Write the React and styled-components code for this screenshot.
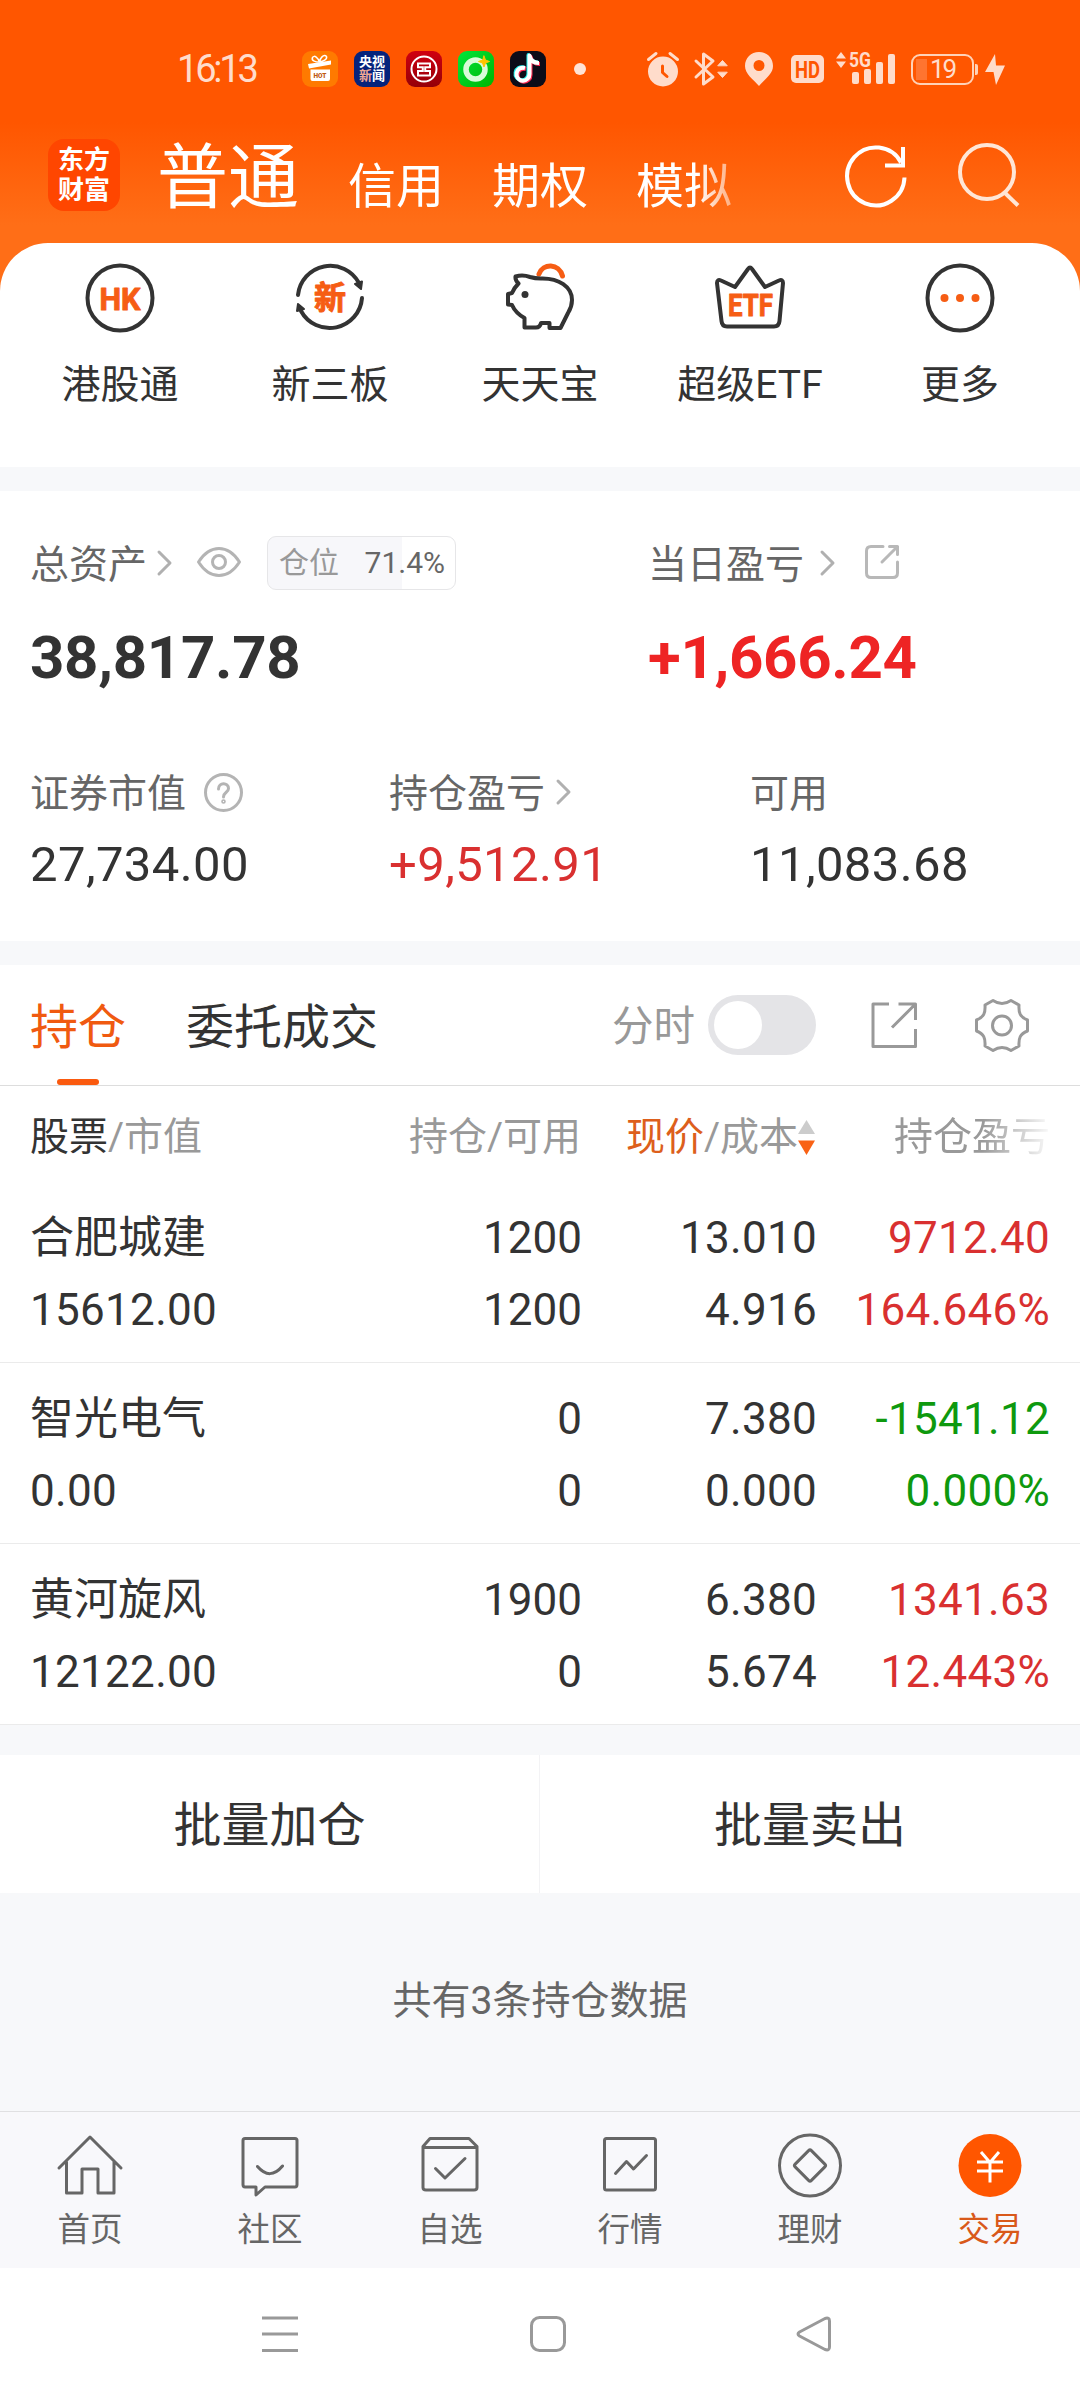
import React from "react";
import styled, { createGlobalStyle, css } from "styled-components";

const GlobalStyle = createGlobalStyle`
  * { box-sizing: border-box; }
  body { margin: 0; background: #fff; }
  svg { display: block; flex: none; overflow: visible; }
`;

const Screen = styled.div`
  width: 1080px;
  height: 2400px;
  display: flex;
  flex-direction: column;
  overflow: hidden;
  background: #fff;
  color: #333;
  font-family: Roboto, "Noto Sans CJK SC", sans-serif;
  white-space: nowrap;
`;

/* ---------- header ---------- */
const Header = styled.header`
  height: 243px;
  background: linear-gradient(#ff5600 0, #ff5600 122px, #ff6e17 225px, #ff6e17 100%);
`;

const StatusBar = styled.div`
  height: 115px;
  padding: 23px 0 0 177px;
  display: flex;
  align-items: center;
  color: #ffdccb;
`;

const Time = styled.div`
  flex: none;
  width: 125px;
  font-size: 38px;
  line-height: 44px;
  letter-spacing: -3.2px;
`;

const AppIcons = styled.div`
  flex: none;
  display: flex;
  gap: 16px;
`;

const AppIcon = styled.div`
  width: 36px;
  height: 36px;
  border-radius: 9px;
  background: ${(p) => p.$bg};
  overflow: hidden;
  color: #fff;
  display: grid;
  place-content: center;
  text-align: center;
  font-size: 13px;
  line-height: 14px;
  font-weight: 700;
`;

const Tint = styled.span`
  color: #f2a993;
`;

const Dot = styled.div`
  flex: none;
  width: 12px;
  height: 12px;
  border-radius: 50%;
  background: #ffe3d6;
  margin: 0 61px 0 28px;
`;

const Indicators = styled.div`
  display: flex;
  align-items: center;
`;

const Slot = styled.div`
  flex: none;
  margin-right: ${(p) => p.$gap}px;
`;

const Battery = styled.div`
  flex: none;
  width: 63px;
  height: 31px;
  padding: 2px;
  border: 2px solid #ffd2b8;
  border-radius: 9px;
  display: flex;
  align-items: center;
  justify-content: center;
  font-size: 26px;
  line-height: 26px;
  letter-spacing: -2px;
  background: linear-gradient(#ff7430, #ff7430) 3px 3px / 11px 21px no-repeat;
`;

const BatteryCap = styled.div`
  width: 3px;
  height: 11px;
  margin: 0 7px 0 1px;
  background: #ffd2b8;
  border-radius: 0 2px 2px 0;
`;

const TitleBar = styled.div`
  height: 128px;
  padding: 0 60px 0 48px;
  display: flex;
  color: #fff;
`;

const Logo = styled.div`
  width: 72px;
  height: 72px;
  margin-top: 24px;
  border-radius: 16px;
  background: #ff4600;
  display: grid;
  place-content: center;
  font-size: 26px;
  line-height: 30px;
  font-weight: 700;
  text-align: center;
`;

const AccountTabs = styled.nav`
  width: 640px;
  margin-left: 37px;
  display: flex;
  align-items: flex-start;
  height: 128px;
  mask-image: linear-gradient(90deg, #000 540px, transparent 605px);
`;

const AccountTab = styled.span`
  margin-right: 48px;
  font-size: 48px;
  line-height: 143px;
  ${(p) => p.$active && css`
    margin-right: 49px;
    font-size: 71px;
    line-height: 125px;
  `}
`;

const HeaderActions = styled.div`
  display: flex;
  gap: 51px;
  padding-top: 30px;
  margin-left: 48px;
`;

/* ---------- shortcuts ---------- */
const ShortcutBack = styled.div`
  background: #ff6e17;
`;

const Shortcuts = styled.div`
  height: 224px;
  padding: 20px 15px 0;
  background: #fff;
  border-radius: 48px 48px 0 0;
  display: grid;
  grid-template-columns: repeat(5, 210px);
`;

const Shortcut = styled.div`
  display: flex;
  flex-direction: column;
  align-items: center;
  gap: 27px;
  font-size: 39px;
  line-height: 50px;
`;

const Band = styled.div`
  height: ${(p) => p.$h}px;
  background: #f7f8fa;
`;

/* ---------- assets ---------- */
const Assets = styled.section`
  height: 450px;
  padding: 45px 30px 0;
`;

const PrimaryRow = styled.div`
  display: grid;
  grid-template-columns: 618px 1fr;
`;

const SecondaryRow = styled.div`
  display: grid;
  grid-template-columns: 359px 361px 1fr;
  margin-top: 71px;
`;

const Label = styled.div`
  height: 54px;
  display: flex;
  align-items: center;
  font-size: 39px;
  line-height: 54px;
  color: #666;
`;

const LabelText = styled.span`
  padding-top: 3px;
  margin-right: ${(p) => p.$gap}px;
`;

const BigValue = styled.div`
  margin-top: 32px;
  font-size: 60px;
  line-height: 72px;
  font-weight: 700;
  letter-spacing: -0.3px;
  color: ${(p) => p.$color || "#333"};
`;

const Value = styled.div`
  margin-top: 17px;
  font-size: 49px;
  line-height: 58px;
  letter-spacing: 0.4px;
  color: ${(p) => p.$color || "#333"};
`;

const PositionBadge = styled.div`
  width: 189px;
  height: 54px;
  margin-left: 26px;
  padding: 0 10px 0 11px;
  display: flex;
  align-items: center;
  justify-content: space-between;
  border: 1px solid #e6e6e8;
  border-radius: 9px;
  background: linear-gradient(90deg, #f7f7fa 71.4%, #fff 71.4%);
  font-size: 30px;
  color: #666;
`;

const Muted = styled.span`
  color: #999;
`;

/* ---------- holdings ---------- */
const HoldingsBar = styled.div`
  height: 121px;
  border-bottom: 1px solid #ddd;
  padding: 0 51px 0 30px;
  display: flex;
  align-items: center;
`;

const HoldingsTab = styled.div`
  height: 120px;
  margin-right: 60px;
  display: flex;
  flex-direction: column;
  align-items: center;
  justify-content: space-between;
  font-size: 48px;
  line-height: 126px;
  color: ${(p) => (p.$active ? "#f05a10" : "#333")};
`;

const HoldingsTabText = styled.span`
  height: 114px;
`;

const Underline = styled.span`
  width: 42px;
  height: 6px;
  border-radius: 3px;
  background: #fa5a0f;
`;

const Tools = styled.div`
  margin-left: auto;
  display: flex;
  align-items: center;
`;

const ToggleLabel = styled.span`
  font-size: 41.5px;
  line-height: 50px;
  color: #999;
  padding-top: 4px;
`;

const Toggle = styled.div`
  width: 108px;
  height: 60px;
  margin: 0 55px 0 13px;
  padding: 6px;
  border-radius: 30px;
  background: #e4e4e7;
`;

const Knob = styled.div`
  width: 48px;
  height: 48px;
  border-radius: 50%;
  background: #fff;
`;

const tableColumns = css`
  padding: 0 30px;
  display: grid;
  grid-template-columns: 303px 249px 235px 233px;
`;

const TableHead = styled.div`
  ${tableColumns}
  height: 96px;
  font-size: 39px;
  line-height: 102px;
  color: #999;
`;

const HeadCell = styled.div`
  display: flex;
  align-items: center;
  justify-content: ${(p) => (p.$left ? "flex-start" : "flex-end")};
  padding-right: ${(p) => p.$inset || 0}px;
  ${(p) => p.$fade && css`mask-image: linear-gradient(90deg, #000 165px, rgba(0, 0, 0, 0.05) 233px);`}
`;

const HeadStrong = styled.span`
  color: ${(p) => p.$color};
`;

const Row = styled.div`
  ${tableColumns}
  height: 181px;
  padding-top: 20px;
  border-bottom: 1px solid #ebebeb;
  font-size: 44px;
  line-height: 72px;
`;

const Cell = styled.div`
  text-align: ${(p) => (p.$left ? "left" : "right")};
  color: ${(p) => p.$color || "#333"};
`;

const Amount = styled.span`
  letter-spacing: 0.3px;
`;

const BatchActions = styled.div`
  height: 138px;
  display: grid;
  grid-template-columns: 1fr 1fr;
`;

const BatchButton = styled.div`
  font-size: 48px;
  line-height: 142px;
  text-align: center;
  border-right: ${(p) => (p.$divided ? "1px solid #f3f3f5" : "0")};
`;

const Summary = styled.div`
  height: 218px;
  background: #f7f8fa;
  color: #666;
  font-size: 39px;
  line-height: 216px;
  text-align: center;
`;

/* ---------- bottom ---------- */
const TabBar = styled.nav`
  height: 157px;
  border-top: 1px solid #e0e0e2;
  background: #f8f8fb;
  display: grid;
  grid-template-columns: repeat(6, 180px);
`;

const TabItem = styled.div`
  display: flex;
  flex-direction: column;
  align-items: center;
  padding-top: 20px;
  gap: 12px;
  font-size: 32.5px;
  line-height: 40px;
  color: ${(p) => (p.$active ? "#d9591a" : "#666")};
`;

const SystemNav = styled.div`
  height: 132px;
  padding: 0 249px 0 262px;
  display: flex;
  align-items: center;
  justify-content: space-between;
`;

/* ---------- drawings ---------- */
const Svg = ({ w, h, children, color = "#333", sw = 3, fill = "none" }) => (
  <svg width={w} height={h} viewBox={`0 0 ${w} ${h}`} fill={fill} stroke={color} strokeWidth={sw} strokeLinecap="round" strokeLinejoin="round">
    {children}
  </svg>
);

const iconText = {
  fill: "#f65d14",
  stroke: "#f65d14",
  strokeWidth: 1,
  fontWeight: 700,
  fontFamily: 'Roboto, "Noto Sans CJK SC", sans-serif',
  textAnchor: "middle",
};

const Chevron = () => (
  <Svg w={15} h={26} color="#b0b0b0"><path d="M2 2 13 13 2 24" /></Svg>
);

const shortcuts = [
  ["港股通", <Svg w={70} h={70} sw={4}>
    <circle cx="35" cy="35" r="32.5" />
    <text x="35" y="46.5" fontSize="32" textLength="41" lengthAdjust="spacingAndGlyphs" {...iconText}>HK</text>
  </Svg>],
  ["新三板", <Svg w={70} h={70} sw={4}>
    <path d="M3 32A32.5 32.5 0 0 1 64 20M67 35A32.5 32.5 0 0 1 6 48" />
    <path d="M60 21 67 18.5 66 26ZM3 41 2 48 9 46Z" fill="#333" strokeWidth="2" />
    <text x="35" y="46" fontSize="32" {...iconText}>新</text>
  </Svg>],
  ["天天宝", <Svg w={70} h={70} sw={4}>
    <path d="M34 11C38 0 54 0 57.500 13" stroke="#f65d14" strokeWidth="5" />
    <path d="M10.500 13.500Q18 11.500 25 14Q30 15.500 36 15.500C54 15 67 24 67 37C67 42 65.500 46 63 50L55.500 65H44.500V60H36Q35 64.500 31 64.500H19.500V55Q10.500 50 7 42L3 41.500V31L7 30Q9 25 13.500 20.500Q10 17 10.500 13.500Z" />
    <circle cx="20" cy="31.500" r="3.500" fill="#333" stroke="none" />
  </Svg>],
  ["超级ETF", <Svg w={70} h={70} sw={4}>
    <path d="M6 17.500 20 24 33 6Q35 3 37 6L50 24 64 17.500Q68 16 68 20L64.500 58Q64 63.500 59 63.500H12Q7 63.500 6.500 58L2 20Q2 16 6 17.500Z" />
    <text x="35.500" y="52.500" fontSize="32" textLength="45" lengthAdjust="spacingAndGlyphs" {...iconText}>ETF</text>
  </Svg>],
  ["更多", <Svg w={70} h={70} sw={4}>
    <circle cx="35" cy="35" r="32.5" />
    <g fill="#f65d14" stroke="none"><circle cx="19.500" cy="35" r="4" /><circle cx="35" cy="35" r="4" /><circle cx="50.500" cy="35" r="4" /></g>
  </Svg>],
];

const tabs = [
  ["首页", <Svg w={66} h={66} color="#666">
    <path d="M2 36 33 5 64 36M9.500 30V61H25V37H41V61H57V30" />
  </Svg>],
  ["社区", <Svg w={66} h={66} color="#666">
    <path d="M8 6.500H58Q60 6.500 60 8.500V52.500Q60 55 58 55H28L19 63V55H8Q6 55 6 52.500V8.500Q6 6.500 8 6.500ZM20.500 34.500Q33 49 45.500 34" />
  </Svg>],
  ["自选", <Svg w={66} h={66} color="#666">
    <path d="M6 14.500 13 6.500H52L60 14.500V55.500Q60 58 57 58H9Q6 58 6 55.500ZM6 15.500H60M18.500 36.500 28 46 48 26.500" />
  </Svg>],
  ["行情", <Svg w={66} h={66} color="#666">
    <rect x="7.500" y="6.500" width="51" height="51.500" rx="2" />
    <path d="M18.500 41.500 29.500 29.500 36.500 37 49.500 23.500" />
  </Svg>],
  ["理财", <Svg w={66} h={66} color="#666">
    <circle cx="33" cy="33.500" r="30.500" />
    <rect x="21.500" y="22" width="23" height="23" rx="2" transform="rotate(45 33 33.500)" />
  </Svg>],
  ["交易", <Svg w={66} h={66} color="#fff">
    <circle cx="33" cy="33.500" r="31.500" fill="#ff5600" stroke="none" />
    <path d="M24 20 33 30.500 42 20M33 30.500V50.500M20 30H46M20 39H46" strokeLinecap="butt" />
  </Svg>],
];

const RED = "#d93030";
const GREEN = "#0e990e";

const holdings = [
  { name: "合肥城建", value: "15612.00", held: "1200", usable: "1200", price: "13.010", cost: "4.916", profit: "9712.40", rate: "164.646%", color: RED },
  { name: "智光电气", value: "0.00", held: "0", usable: "0", price: "7.380", cost: "0.000", profit: "-1541.12", rate: "0.000%", color: GREEN },
  { name: "黄河旋风", value: "12122.00", held: "1900", usable: "0", price: "6.380", cost: "5.674", profit: "1341.63", rate: "12.443%", color: RED },
];

const StatusIndicators = () => (
  <Indicators>
    <Slot $gap={15}>
      <Svg w={32} h={34} color="#ffdccb">
        <circle cx="16" cy="19.500" r="15" fill="#ffdccb" stroke="none" />
        <path d="M1.500 7.500 9 1.500M30.500 7.500 23 1.500" />
        <path d="M15.500 14V20.500L20 24.500" stroke="#ff5600" />
      </Svg>
    </Slot>
    <Slot $gap={17}>
      <Svg w={34} h={34} color="#ffdccb">
        <path d="M2 9 19 25 9.500 32V2L19 9 2 25" />
        <path d="M24 13.500 28.500 8.500 33 13.500ZM24 20.500 28.500 25.500 33 20.500Z" fill="#ffdccb" strokeWidth="1" />
      </Svg>
    </Slot>
    <Slot $gap={18}>
      <Svg w={28} h={34}>
        <path d="M14 0C6 0 0 6 0 14C0 22 8 27 14 34C20 27 28 22 28 14C28 6 22 0 14 0ZM14 8A5.500 5.500 0 1 1 14 19A5.500 5.500 0 1 1 14 8Z" fill="#ffdccb" stroke="none" fillRule="evenodd" />
      </Svg>
    </Slot>
    <Slot $gap={12}>
      <Svg w={33} h={28}>
        <rect width="33" height="28" rx="5" fill="#ffdccb" stroke="none" />
        <text x="16.500" y="22.500" fontSize="23" fontWeight="700" fontFamily="Roboto, sans-serif" textAnchor="middle" textLength="25" lengthAdjust="spacingAndGlyphs" fill="#ff5600" stroke="none">HD</text>
      </Svg>
    </Slot>
    <Slot $gap={16}>
      <Svg w={59} h={34} fill="#ffdccb">
        <g stroke="none">
          <path d="M0 6.500 5 0 10 6.500ZM0 9.500 5 16 10 9.500Z" />
          <rect x="16" y="20" width="7" height="12" rx="2" />
          <rect x="28" y="17" width="7" height="15" rx="2" />
          <rect x="40" y="10" width="7" height="22" rx="2" />
          <rect x="52" y="2" width="7" height="30" rx="2" />
          <text x="13" y="15" fontSize="20" fontWeight="700" fontFamily="Roboto, sans-serif" textLength="22" lengthAdjust="spacingAndGlyphs">5G</text>
        </g>
      </Svg>
    </Slot>
    <Battery>19</Battery>
    <BatteryCap />
    <Svg w={20} h={31} fill="#ffdccb" color="#ffdccb" sw={1}>
      <path d="M10 0 0 18H8.500L11 31 20 11.500H11Z" stroke="none" />
    </Svg>
  </Indicators>
);

export default function App() {
  return (
    <Screen>
      <GlobalStyle />
      <Header>
        <StatusBar>
          <Time>16:13</Time>
          <AppIcons>
            <AppIcon $bg="#ff7a00">
              <Svg w={36} h={36}>
                <path d="M17.500 11C14 11 9 10 10.500 6.500C12.500 3.500 16 7 17.500 11C18 7 22 2.500 24.500 5.500C25.500 8.500 21 10.500 17.500 11" stroke="#fff" strokeWidth="1.500" />
                <path d="M6 13 29 9.500V13.500L7 17.500ZM8.500 18.500H28V28Q28 30 26 30H10.500Q8.500 30 8.500 28Z" fill="#fff" stroke="none" />
                <text x="18" y="26.500" fontSize="6.500" fontWeight="900" fontFamily="Roboto, sans-serif" textAnchor="middle" fill="#c05a10" stroke="none">HOT</text>
              </Svg>
            </AppIcon>
            <AppIcon $bg="#05237c"><span>央视</span><span><Tint>新</Tint>闻</span></AppIcon>
            <AppIcon $bg="linear-gradient(#d00010, #940008)">
              <Svg w={36} h={36} color="#fff" sw={2}>
                <circle cx="18" cy="18" r="12.500" />
                <path d="M16.800 12.500H12V16.300H16.800V20H12V24.500H16.800M19.200 12.500H24V16.300H19.200V20H24V24.500H19.200M16 12.500H20M16 24.500H20" strokeLinecap="butt" strokeLinejoin="miter" />
              </Svg>
            </AppIcon>
            <AppIcon $bg="linear-gradient(135deg, #00e63c, #00b400)">
              <Svg w={36} h={36}>
                <circle cx="17.500" cy="18.500" r="9.500" stroke="#d9fbd9" strokeWidth="5.500" />
                <path d="M26 5 27.500 9 31.500 10.500 27.500 12 26 16 24.500 12 20.500 10.500 24.500 9Z" fill="#ffc400" stroke="#ffc400" strokeWidth="1" />
              </Svg>
            </AppIcon>
            <AppIcon $bg="#0c0c18">
              <Svg w={36} h={36} sw={4}>
                <g strokeLinecap="butt">
                  <path d="M15 17A6.500 6.500 0 1 0 19.500 23V4.500C20.500 9 24 12 29 12" stroke="#ff2a55" transform="translate(1 1)" />
                  <path d="M15 17A6.500 6.500 0 1 0 19.500 23V4.500C20.500 9 24 12 29 12" stroke="#25f4ee" transform="translate(-1 -.5)" />
                  <path d="M15 17A6.500 6.500 0 1 0 19.500 23V4.500C20.500 9 24 12 29 12" stroke="#fff" />
                </g>
              </Svg>
            </AppIcon>
          </AppIcons>
          <Dot />
          <StatusIndicators />
        </StatusBar>
        <TitleBar>
          <Logo><span>东方</span><span>财富</span></Logo>
          <AccountTabs>
            <AccountTab $active>普通</AccountTab>
            <AccountTab>信用</AccountTab>
            <AccountTab>期权</AccountTab>
            <AccountTab>模拟</AccountTab>
          </AccountTabs>
          <HeaderActions>
            <Svg w={62} h={62} color="#fff" sw={4}>
              <path d="M59.500 32.500A28.700 29 0 1 1 56 17.500M58 2V20.500H40" strokeLinecap="butt" strokeLinejoin="miter" />
            </Svg>
            <Svg w={62} h={62} color="#ffe6d6" sw={4}>
              <path d="M47 48 60 60.500" strokeLinecap="butt" />
              <circle cx="29" cy="27" r="27" />
            </Svg>
          </HeaderActions>
        </TitleBar>
      </Header>

      <ShortcutBack>
        <Shortcuts>
          {shortcuts.map(([label, icon]) => (
            <Shortcut key={label}>{icon}<span>{label}</span></Shortcut>
          ))}
        </Shortcuts>
      </ShortcutBack>
      <Band $h={24} />

      <Assets>
        <PrimaryRow>
          <div>
            <Label>
              <LabelText $gap={10}>总资产</LabelText>
              <Chevron />
              <Slot $gap={25} />
              <Svg w={44} h={34} color="#b4b4b4">
                <path d="M1.500 16C13-2 31-2 42.500 16C31 34 13 34 1.500 16Z" />
                <circle cx="22" cy="16" r="6.500" />
              </Svg>
              <PositionBadge><Muted>仓位</Muted><span>71.4%</span></PositionBadge>
            </Label>
            <BigValue>38,817.78</BigValue>
          </div>
          <div>
            <Label>
              <LabelText $gap={16}>当日盈亏</LabelText>
              <Chevron />
              <Slot $gap={30} />
              <Svg w={34} h={36} color="#b8b8b8">
                <path d="M18 1.500H6Q1.500 1.500 1.500 6V28Q1.500 32.500 6 32.500H28Q32.500 32.500 32.500 28V17M24.500 1.500H32.500V9.500M32.500 1.500 17 17" />
              </Svg>
            </Label>
            <BigValue $color="#ee2424">+1,666.24</BigValue>
          </div>
        </PrimaryRow>
        <SecondaryRow>
          <div>
            <Label>
              <LabelText $gap={18}>证券市值</LabelText>
              <Svg w={39} h={39} color="#b4b4b4">
                <circle cx="19.500" cy="19.500" r="18" />
                <path d="M14.500 16C14.500 9 24.500 9 24.500 15.500C24.500 19.500 19.500 19 19.500 24" />
                <circle cx="19.500" cy="28.500" r=".8" />
              </Svg>
            </Label>
            <Value>27,734.00</Value>
          </div>
          <div>
            <Label><LabelText $gap={11}>持仓盈亏</LabelText><Chevron /></Label>
            <Value $color={RED}>+9,512.91</Value>
          </div>
          <div>
            <Label><LabelText>可用</LabelText></Label>
            <Value>11,083.68</Value>
          </div>
        </SecondaryRow>
      </Assets>
      <Band $h={24} />

      <HoldingsBar>
        <HoldingsTab $active><HoldingsTabText>持仓</HoldingsTabText><Underline /></HoldingsTab>
        <HoldingsTab><HoldingsTabText>委托成交</HoldingsTabText></HoldingsTab>
        <Tools>
          <ToggleLabel>分时</ToggleLabel>
          <Toggle><Knob /></Toggle>
          <Svg w={46} h={46} color="#999">
            <path d="M18 2H2V44.500H44.500V27M27.500 2H44.500V18M44 2.500 21 25.500" strokeLinecap="butt" />
          </Svg>
          <Slot $gap={58} />
          <Svg w={54} h={55} color="#999">
            <path d="M18 2.500Q27 8.500 36 2.500L44 7C43.500 15 45 19 52.500 22V33C45 36 43.500 40 44 48L36 52.500Q27 46.500 18 52.500L10 48C10.500 40 9 36 1.500 33V22C9 19 10.500 15 10 7Z" />
            <circle cx="27" cy="27.500" r="9.500" />
          </Svg>
        </Tools>
      </HoldingsBar>

      <TableHead>
        <HeadCell $left><HeadStrong $color="#333">股票</HeadStrong>/市值</HeadCell>
        <HeadCell $inset={1}>持仓/可用</HeadCell>
        <HeadCell $inset={2}>
          <HeadStrong $color="#dd5f1c">现价</HeadStrong>/成本
          <Svg w={17} h={35}>
            <path d="M8.500 0 17 14H0Z" fill="#ccc" stroke="none" />
            <path d="M8.500 35 17 20.500H0Z" fill="#f96215" stroke="none" />
          </Svg>
        </HeadCell>
        <HeadCell $fade>持仓盈亏</HeadCell>
      </TableHead>

      {holdings.map((h) => (
        <Row key={h.name}>
          <Cell $left>{h.name}<br /><Amount>{h.value}</Amount></Cell>
          <Cell>{h.held}<br />{h.usable}</Cell>
          <Cell><Amount>{h.price}</Amount><br /><Amount>{h.cost}</Amount></Cell>
          <Cell $color={h.color}><Amount>{h.profit}</Amount><br /><Amount>{h.rate}</Amount></Cell>
        </Row>
      ))}

      <Band $h={30} />
      <BatchActions>
        <BatchButton $divided>批量加仓</BatchButton>
        <BatchButton>批量卖出</BatchButton>
      </BatchActions>
      <Summary>共有3条持仓数据</Summary>

      <TabBar>
        {tabs.map(([label, icon], i) => (
          <TabItem key={label} $active={i === 5}>{icon}<span>{label}</span></TabItem>
        ))}
      </TabBar>
      <SystemNav>
        <Svg w={36} h={36} color="#999"><path d="M0 2H36M0 18H36M0 34.500H36" strokeLinecap="butt" /></Svg>
        <Svg w={36} h={36} color="#999"><rect x="2.500" y="1.500" width="33" height="33" rx="8" /></Svg>
        <Svg w={35} h={36} color="#999"><path d="M29 2.500 3.500 16Q.5 18 3.500 20L29 33.500Q33.500 35 33.500 31V5Q33.500 1 29 2.500Z" /></Svg>
      </SystemNav>
    </Screen>
  );
}
